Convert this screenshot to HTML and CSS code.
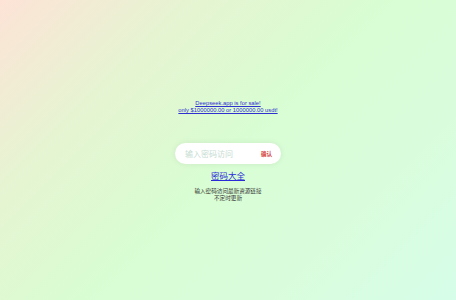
FILE: index.html
```html
<!DOCTYPE html>
<html>
<head>
<meta charset="utf-8">
<link rel="stylesheet" href="styles.css">
</head>
<body>
<div class="page">
  <a class="sale" href="#">Deepseek.app is for sale!<br>only $1000000.00 or 1000000.00 usdt!</a>
  <div class="box">
    <span class="ph">输入密码访问</span>
    <span class="ok">确认</span>
  </div>
  <a class="all" href="#">密码大全</a>
  <div class="note">输入密码访问最新资源链接<br>不定时更新</div>
</div>
</body>
</html>
```
FILE: styles.css
```css
html, body { margin: 0; height: 100%; }
body {
  background: linear-gradient(135deg, #fde3d6 0%, #e6f4d2 25%, #d9fdd3 50%, #d9fddc 75%, #d6fde9 100%);
  font-family: "Liberation Sans", "Noto Sans CJK SC", sans-serif;
}
.page {
  display: flex;
  flex-direction: column;
  align-items: center;
  padding-top: 100px;
}
.sale {
  color: #3030d0;
  font-size: 5.8px;
  line-height: 7px;
  text-align: center;
}
.box {
  margin-top: 29px;
  width: 106px;
  height: 21px;
  box-sizing: border-box;
  background: #fff;
  border-radius: 11px;
  box-shadow: 0 0 6px rgba(0,0,0,0.08);
  display: flex;
  align-items: center;
  justify-content: space-between;
  padding: 0 9px 0 10px;
}
.ph {
  font-family: "Noto Sans CJK SC", sans-serif;
  font-size: 8px;
  color: #c6dcd2;
}
.ok {
  font-family: "Noto Sans CJK SC", sans-serif;
  font-size: 5.5px;
  font-weight: bold;
  color: #d33a3a;
}
.all {
  margin-top: 5px;
  font-family: "Noto Sans CJK SC", sans-serif;
  font-size: 8.5px;
  color: #2b2bd8;
}
.note {
  margin-top: 7px;
  font-family: "Noto Sans CJK SC", sans-serif;
  font-size: 5.6px;
  line-height: 7px;
  color: #333;
  text-align: center;
}
```
